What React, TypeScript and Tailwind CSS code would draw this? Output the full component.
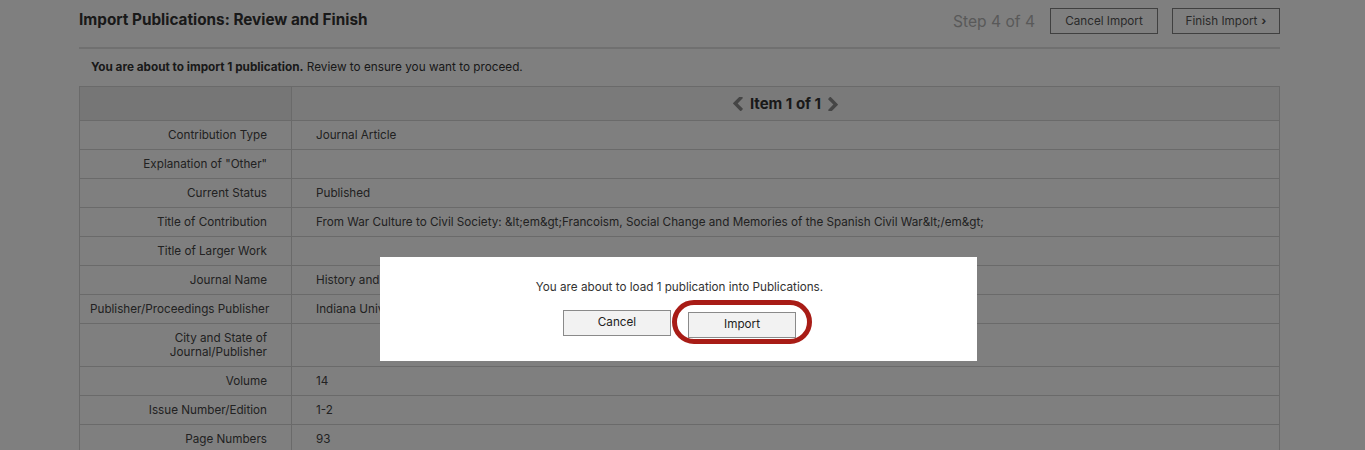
import React from "react";

const rows: { label: React.ReactNode; value: string }[] = [
    { label: "Contribution Type", value: "Journal Article" },
    { label: 'Explanation of "Other"', value: "" },
    { label: "Current Status", value: "Published" },
    {
        label: "Title of Contribution",
        value: "From War Culture to Civil Society: &lt;em&gt;Francoism, Social Change and Memories of the Spanish Civil War&lt;/em&gt;",
    },
    { label: "Title of Larger Work", value: "" },
    { label: "Journal Name", value: "History and Memory" },
    { label: "Publisher/Proceedings Publisher", value: "Indiana University Press" },
    {
        label: (
            <>
                City and State of
                <br />
                Journal/Publisher
            </>
        ),
        value: "",
    },
    { label: "Volume", value: "14" },
    { label: "Issue Number/Edition", value: "1-2" },
    { label: "Page Numbers", value: "93" },
];

function Chevron({ dir }: { dir: "left" | "right" }) {
    return (
        <svg
            viewBox="50 160 1150 1470"
            className={`h-[14px] w-[11px] fill-[#8a8a8a] ${dir === "right" ? "rotate-180" : ""}`}
        >
            <path d="M1171 301l-531 531 531 531q19 19 19 45t-19 45l-166 166q-19 19-45 19t-45-19l-742-742q-19-19-19-45t19-45l742-742q19-19 45-19t45 19l166 166q19 19 19 45t-19 45z" />
        </svg>
    );
}

export default function App() {
    return (
        <div className="relative h-[450px] overflow-hidden bg-white font-['Inter','Liberation_Sans',sans-serif] text-[#444]">
            <div className="ml-[79px] w-[1201px]">
                {/* page header */}
                <div className="flex h-[47px] items-start justify-between border-b-2 border-[#e0e0e0] box-content">
                    <h1 className="mt-[8px] text-[15.3px] font-bold leading-6 text-[#333]">
                        Import Publications: Review and Finish
                    </h1>
                    <div className="mt-2 flex items-center">
                        <span className="mr-[15px] pt-[2px] text-[15.6px] text-[#b3b3b3]">Step 4 of 4</span>
                        <button className="flex h-[26px] w-[108px] items-center justify-center border border-[#808080] pt-[2px] text-[11.7px] leading-none text-[#555]">
                            Cancel Import
                        </button>
                        <button className="ml-[14px] flex h-[26px] w-[108px] items-center justify-center border border-[#808080] pt-[2px] text-[11.7px] leading-none text-[#555]">
                            Finish Import <span className="ml-1 font-bold">›</span>
                        </button>
                    </div>
                </div>

                <p className="mt-[11px] pl-3 text-[11.75px] leading-[14px] text-[#333]">
                    <b>You are about to import 1 publication.</b> Review to ensure you want to proceed.
                </p>

                <table className="mt-[12px] w-full table-fixed border-collapse border border-[#d4d4d4] text-[11.7px] leading-[14px]">
                    <colgroup>
                        <col className="w-[212px]" />
                        <col />
                    </colgroup>
                    <thead>
                        <tr>
                            <th className="h-[34px] border border-[#d4d4d4] bg-[#ececec]" />
                            <th className="h-[34px] border border-[#d4d4d4] bg-[#f4f4f4]">
                                <div className="flex items-center justify-center gap-[7px] text-[15px] font-bold text-[#333]">
                                    <Chevron dir="left" />
                                    <span>Item 1 of 1</span>
                                    <Chevron dir="right" />
                                </div>
                            </th>
                        </tr>
                    </thead>
                    <tbody>
                        {rows.map((row, i) => (
                            <tr key={i}>
                                <td className="whitespace-nowrap border border-[#d4d4d4] py-[7px] pl-[10px] pr-6 text-right">
                                    {row.label}
                                </td>
                                <td className="border border-[#d4d4d4] py-[7px] pl-6 pr-3">
                                    {row.value || "\u00a0"}
                                </td>
                            </tr>
                        ))}
                    </tbody>
                </table>
            </div>

            {/* modal */}
            <div className="absolute inset-0 bg-black/50" />
            <div className="absolute left-[380px] top-[257px] w-[597px] bg-white pb-[23px] pl-[2px] pt-[23px] text-center">
                <p className="text-[11.7px] leading-[14px] text-[#333]">
                    You are about to load 1 publication into Publications.
                </p>
                <div className="mt-4 flex justify-center gap-[17px]">
                    <button className="h-[26px] w-[108px] border border-[#8a8a8a] bg-[#f2f2f2] text-[11.7px] text-[#222]">
                        Cancel
                    </button>
                    <div className="relative">
                        <button className="h-[26px] w-[108px] border border-[#8a8a8a] bg-[#f2f2f2] text-[11.7px] text-[#222]">
                            Import
                        </button>
                        <span className="pointer-events-none absolute -bottom-[6px] -left-4 -right-4 -top-[10px] rounded-full border-[5px] border-[#a81c16]" />
                    </div>
                </div>
            </div>
        </div>
    );
}
